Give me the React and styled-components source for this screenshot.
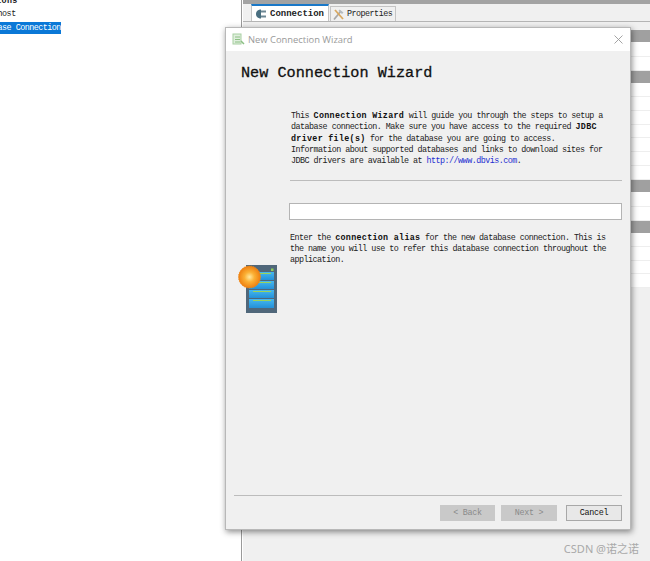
import React from "react";
import styled, { createGlobalStyle } from "styled-components";

const mono = `"Liberation Mono", "DejaVu Sans Mono", monospace`;

const Global = createGlobalStyle`
  html, body { margin: 0; padding: 0; background: #fff; }
  body { font-family: ${mono}; overflow: hidden; }
`;

const Page = styled.div`
  position: relative;
  width: 650px;
  height: 561px;
  display: flex;
  overflow: hidden;
`;

const TreePane = styled.div`
  width: 241px;
  flex: none;
  background: #fff;
  border-right: 1px solid #9a9a9a;
  overflow: hidden;
  color: #222;
`;

const Tree = styled.div`
  margin: -5px 0 0 -78px;
  display: flex;
  flex-direction: column;
  align-items: flex-start;
`;

const TreeRow = styled.div`
  height: ${(p) => p.$h || 12}px;
  line-height: ${(p) => p.$h || 12}px;
  padding: 0 0 0 ${(p) => p.$indent || 0}px;
  white-space: pre;
  font-size: 8.4px;
  letter-spacing: ${(p) => (p.$bold ? "0.3px" : "-0.51px")};
  font-weight: ${(p) => (p.$bold ? 700 : 400)};
  color: ${(p) => (p.$selected ? "#fff" : "#222")};
  background: ${(p) => (p.$selected ? "#0a78d7" : "transparent")};
`;

const MainPane = styled.div`
  flex: 1;
  margin-left: 1px;
  background: #f0f0f0;
  display: flex;
  flex-direction: column;
`;

const TopBar = styled.div`
  height: 4px;
  flex: none;
  background: #a3a3a3;
`;

const Tabs = styled.div`
  height: 17px;
  flex: none;
  display: flex;
  align-items: flex-end;
  padding-left: 8px;
  border-bottom: 1px solid #b4b4b4;
`;

const Tab = styled.div`
  height: ${(p) => (p.$active ? 15 : 14)}px;
  display: flex;
  align-items: center;
  gap: 2px;
  margin-left: ${(p) => (p.$active ? 0 : 1)}px;
  padding: 0 ${(p) => (p.$active ? 4 : 3)}px 0 ${(p) => (p.$active ? 3 : 1)}px;
  background: ${(p) => (p.$active ? "#fff" : "#f0f0f0")};
  border: 1px solid #c4c4c4;
  border-bottom: none;
  border-top: ${(p) => (p.$active ? "2px solid #1a78c8" : "1px solid #c4c4c4")};
  font-size: ${(p) => (p.$active ? "9px" : "8.4px")};
  letter-spacing: ${(p) => (p.$active ? "0" : "-0.51px")};
  font-weight: ${(p) => (p.$active ? 700 : 400)};
  color: #222;
  white-space: nowrap;
`;

const Table = styled.div`
  margin-top: 8px;
  display: flex;
  flex-direction: column;
`;

const GroupHeader = styled.div`
  height: 12px;
  background: #a0a0a0;
`;

const TableRow = styled.div`
  height: ${(p) => p.$h}px;
  background: #fff;
  border-bottom: 1px solid #eeeeee;
  box-sizing: border-box;
`;

const Dialog = styled.div`
  position: absolute;
  left: 225px;
  top: 27px;
  width: 406px;
  height: 503px;
  box-sizing: border-box;
  border: 1px solid #b8b8b8;
  background: #f0f0f0;
  box-shadow: 1px 2px 6px rgba(0, 0, 0, 0.45);
  display: flex;
  flex-direction: column;
`;

const TitleBar = styled.div`
  height: 23px;
  flex: none;
  background: #fff;
  display: flex;
  align-items: center;
  padding: 0 7px 0 6px;
  gap: 3px;
  font-family: "Open Sans", "Noto Sans", sans-serif;
  font-size: 9.4px;
  color: #9a9a9a;
`;

const TitleText = styled.span`
  flex: 1;
`;

const Body = styled.div`
  flex: 1;
  display: flex;
  flex-direction: column;
  padding: 0 8px 8px 8px;
`;

const Heading = styled.h1`
  margin: 13px 0 0 7px;
  font-family: ${mono};
  font-size: 15.2px;
  line-height: 18px;
  font-weight: 400;
  color: #111;
  -webkit-text-stroke: 0.3px #111;
`;

const Content = styled.div`
  flex: 1;
  display: grid;
  grid-template-columns: 56px 1fr;
  padding-top: 29px;
`;

const IconColumn = styled.div`
  padding: 154px 0 0 4px;
`;

const Column = styled.div`
  display: flex;
  flex-direction: column;
`;

const Paragraph = styled.p`
  margin: 0;
  padding-left: ${(p) => p.$indent || 0}px;
  font-size: 8.4px;
  letter-spacing: -0.51px;
  line-height: 11.35px;
  color: #222;
  white-space: pre;
`;

const Strong = styled.b`
  letter-spacing: 0.3px;
  font-weight: 700;
  color: #111;
`;

const LinkText = styled.span`
  color: #1f2fd0;
`;

const Divider = styled.div`
  height: 1px;
  background: #bcbcbc;
  margin: ${(p) => p.$margin || "0"};
`;

const AliasInput = styled.div`
  height: 17px;
  box-sizing: border-box;
  background: #fff;
  border: 1px solid #b4b4b4;
  margin: 0 0 13px -1px;
`;

const Footer = styled.div`
  display: flex;
  justify-content: flex-end;
  gap: 6px;
  padding-top: 9px;
`;

const Button = styled.div`
  width: ${(p) => p.$w}px;
  height: 16px;
  box-sizing: border-box;
  margin-left: ${(p) => p.$gap || 0}px;
  display: flex;
  align-items: center;
  justify-content: center;
  font-size: 8.4px;
  letter-spacing: -0.3px;
  color: ${(p) => (p.disabled ? "#8a8a8a" : "#111")};
  background: ${(p) => (p.disabled ? "#c9c9c9" : "#e8e8e8")};
  border: 1px solid ${(p) => (p.disabled ? "#c9c9c9" : "#a8a8a8")};
`;

const Watermark = styled.div`
  position: absolute;
  right: 11px;
  bottom: 5px;
  font-family: "Noto Sans", "Noto Sans CJK SC", sans-serif;
  font-size: 11px;
  color: #a9a9a9;
`;

const ConnectionGlyph = () => (
  <svg width="13" height="10" viewBox="0 0 13 10">
    <path d="M6 0.5 C2.5 0.5 1 2.8 1 5 C1 7.2 2.5 9.5 6 9.5 Z" fill="#4a6f80" />
    <rect x="6" y="1.5" width="5" height="2" fill="#6d8794" />
    <rect x="6" y="6.5" width="5" height="2" fill="#6d8794" />
  </svg>
);

const ToolsGlyph = () => (
  <svg width="13" height="13" viewBox="0 0 13 13">
    <path d="M2 11.5 L9 3" stroke="#a8a8a8" strokeWidth="1.8" fill="none" />
    <path d="M7.5 1.5 L11.5 4.5 L10 6 L6.5 3 Z" fill="#b4bbc0" />
    <path d="M3 2 L11 11" stroke="#d9a860" strokeWidth="1.8" fill="none" />
  </svg>
);

const WizardGlyph = () => (
  <svg width="13" height="13" viewBox="0 0 13 13">
    <rect x="1" y="1" width="8" height="10" fill="#dfeedd" stroke="#a8cfa2" />
    <path d="M3 4 H8 M3 6.5 H8 M3 9 H8" stroke="#8cc084" />
    <path d="M9 8 L12 11" stroke="#8cc084" strokeWidth="1.5" />
  </svg>
);

const CloseGlyph = () => (
  <svg width="9" height="9" viewBox="0 0 9 9">
    <path d="M0.5 0.5 L8.5 8.5 M8.5 0.5 L0.5 8.5" stroke="#9a9a9a" strokeWidth="0.9" />
  </svg>
);

const ServerArt = () => (
  <svg width="40" height="50" viewBox="0 0 40 50">
    <defs>
      <radialGradient id="sun" cx="0.5" cy="0.5" r="0.5">
        <stop offset="0" stopColor="#ffe9a0" />
        <stop offset="0.45" stopColor="#fbb034" />
        <stop offset="1" stopColor="#ee7f10" />
      </radialGradient>
      <linearGradient id="slot" x1="0" y1="0" x2="0" y2="1">
        <stop offset="0" stopColor="#45b8f0" />
        <stop offset="1" stopColor="#2490d8" />
      </linearGradient>
    </defs>
    <rect x="8" y="0" width="31" height="48" fill="#50677a" />
    <rect x="33" y="3.5" width="2.5" height="2.5" fill="#8fd05a" />
    <rect x="11" y="7" width="25" height="8" fill="url(#slot)" />
    <rect x="11" y="16" width="25" height="8" fill="url(#slot)" />
    <rect x="11" y="25" width="25" height="8" fill="url(#slot)" />
    <rect x="11" y="34" width="25" height="9" fill="url(#slot)" />
    <path d="M22 8.5 H33 M15 17.5 H33 M15 26.5 H33 M15 35.5 H33" stroke="#9bd35a" strokeWidth="1.2" />
    <circle cx="11.5" cy="12" r="11" fill="url(#sun)" stroke="#f08a18" strokeWidth="0.8" strokeDasharray="1.4 1" />
  </svg>
);

const rows = (count, h) => Array.from({ length: count }, (_, i) => <TableRow key={i} $h={h} />);

const App = () => {
  return (
    <>
      <Global />
      <Page>
        <TreePane>
          <Tree>
            <TreeRow $bold $h={12} $indent={37}>Connections</TreeRow>
            <TreeRow $h={15} $indent={53}>Localhost</TreeRow>
            <TreeRow $selected $h={12} $indent={53}>Database Connection</TreeRow>
          </Tree>
        </TreePane>
        <MainPane>
          <TopBar />
          <Tabs>
            <Tab $active>
              <ConnectionGlyph />
              Connection
            </Tab>
            <Tab>
              <ToolsGlyph />
              Properties
            </Tab>
          </Tabs>
          <Table>
            <GroupHeader />
            {rows(2, 14.5)}
            <GroupHeader />
            {rows(7, 13.86)}
            <GroupHeader />
            {rows(2, 14.5)}
            <GroupHeader />
            {rows(4, 13.75)}
          </Table>
        </MainPane>
        <Dialog>
          <TitleBar>
            <WizardGlyph />
            <TitleText>New Connection Wizard</TitleText>
            <CloseGlyph />
          </TitleBar>
          <Body>
            <Heading>New Connection Wizard</Heading>
            <Content>
              <IconColumn>
                <ServerArt />
              </IconColumn>
              <Column>
                <Paragraph $indent={1}>
                  This <Strong>Connection Wizard</Strong> will guide you through the steps to setup a{"\n"}
                  database connection. Make sure you have access to the required <Strong>JDBC</Strong>{"\n"}
                  <Strong>driver file(s)</Strong> for the database you are going to access.{"\n"}
                  Information about supported databases and links to download sites for{"\n"}
                  JDBC drivers are available at <LinkText>http://www.dbvis.com</LinkText>.
                </Paragraph>
                <Divider $margin="12px 0 22px" />
                <AliasInput />
                <Paragraph>
                  Enter the <Strong>connection alias</Strong> for the new database connection. This is{"\n"}
                  the name you will use to refer this database connection throughout the{"\n"}
                  application.
                </Paragraph>
              </Column>
            </Content>
            <Divider />
            <Footer>
              <Button $w={55} disabled>&lt; Back</Button>
              <Button $w={56} disabled>Next &gt;</Button>
              <Button $w={56} $gap={3}>Cancel</Button>
            </Footer>
          </Body>
        </Dialog>
        <Watermark>CSDN @诺之诺</Watermark>
      </Page>
    </>
  );
};

export default App;
